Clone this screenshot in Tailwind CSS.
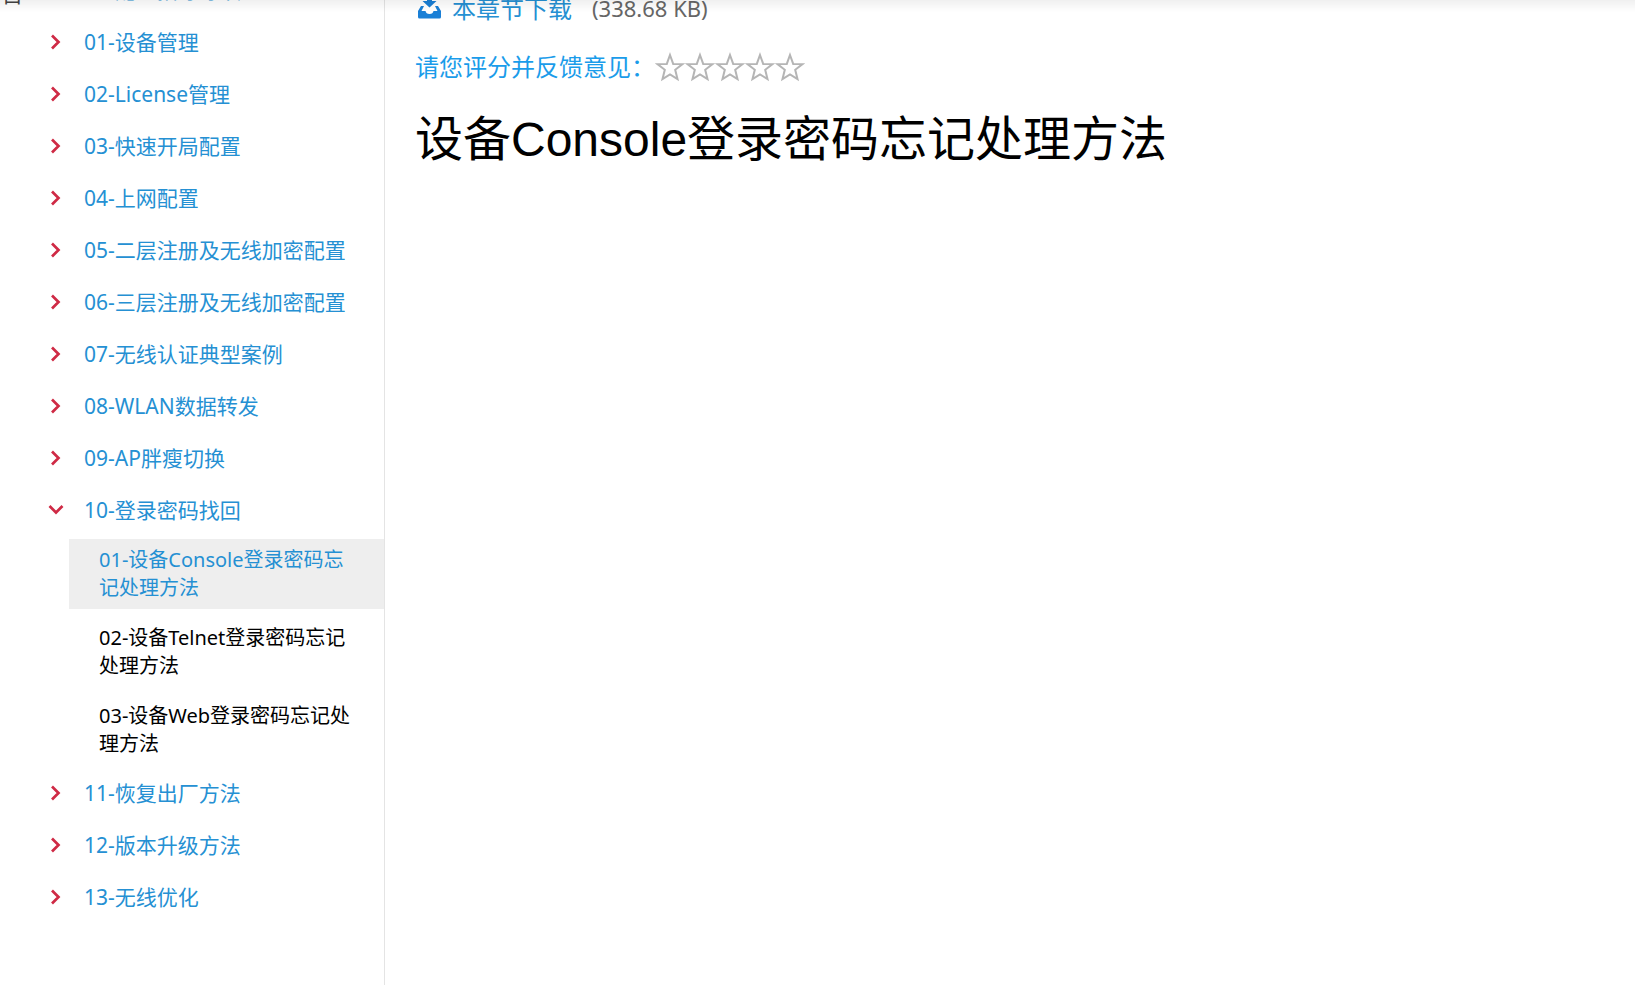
<!DOCTYPE html>
<html lang="zh-CN">
<head>
  <meta charset="UTF-8" />
  <title>设备Console登录密码忘记处理方法</title>
  <meta name="viewport" content="width=device-width, initial-scale=1.0" />
  <script src="https://cdn.jsdelivr.net/npm/@tailwindcss/browser@4"></script>
</head>
<body class="h-screen overflow-hidden bg-white text-black font-['Noto_Sans','Noto_Sans_CJK_SC',sans-serif]">

  <!-- Icons -->
  <svg class="hidden">
    <symbol id="arrow" viewBox="0 0 16 16">
      <path d="M4 1.500l6.500 6.500-6.500 6.500" fill="none" stroke="#cf2a45" stroke-width="2.700" />
    </symbol>
    <symbol id="star" viewBox="0 0 30 30">
      <path d="M15 3l3.200 8.900 9.300.2-7.300 5.700 2.300 9.200-7.500-4.600-7.500 4.600 2.300-9.200L2.500 12.100l9.300-.2z" fill="none" stroke="#b5b5b5" stroke-width="2" />
    </symbol>
  </svg>

  <!-- Shadow under the page header -->
  <div class="fixed inset-x-0 top-0 h-3 bg-linear-to-b from-black/6 to-transparent pointer-events-none z-10"></div>

  <div class="flex h-full">

    <!-- Chapter tree -->
    <nav class="flex w-[385px] shrink-0 border-r border-[#e4e4e4] overflow-hidden text-[21px] text-[#2590d3]">
      <h2 class="w-12 shrink-0 pl-0.5 -mt-[18px] text-[21px] leading-6 text-[#444]">目</h2>
      <ul class="-mt-9 flex-1 leading-[52px]">
        <li class="flex items-center"><svg class="size-4 mr-5"><use href="#arrow" /></svg><a href="#">00-配置指导导读</a></li>
        <li class="flex items-center"><svg class="size-4 mr-5"><use href="#arrow" /></svg><a href="#">01-设备管理</a></li>
        <li class="flex items-center"><svg class="size-4 mr-5"><use href="#arrow" /></svg><a href="#">02-License管理</a></li>
        <li class="flex items-center"><svg class="size-4 mr-5"><use href="#arrow" /></svg><a href="#">03-快速开局配置</a></li>
        <li class="flex items-center"><svg class="size-4 mr-5"><use href="#arrow" /></svg><a href="#">04-上网配置</a></li>
        <li class="flex items-center"><svg class="size-4 mr-5"><use href="#arrow" /></svg><a href="#">05-二层注册及无线加密配置</a></li>
        <li class="flex items-center"><svg class="size-4 mr-5"><use href="#arrow" /></svg><a href="#">06-三层注册及无线加密配置</a></li>
        <li class="flex items-center"><svg class="size-4 mr-5"><use href="#arrow" /></svg><a href="#">07-无线认证典型案例</a></li>
        <li class="flex items-center"><svg class="size-4 mr-5"><use href="#arrow" /></svg><a href="#">08-WLAN数据转发</a></li>
        <li class="flex items-center"><svg class="size-4 mr-5"><use href="#arrow" /></svg><a href="#">09-AP胖瘦切换</a></li>
        <li>
          <div class="flex items-center"><svg class="size-4 mr-5 rotate-90"><use href="#arrow" /></svg><a href="#">10-登录密码找回</a></div>
          <ul class="flex flex-col gap-2 ml-[21px] pt-[3px] pb-0.5 text-xl leading-7 text-black">
            <li><a href="#" class="block py-[7px] pl-[30px] pr-7 bg-[#eee] text-[#2590d3]">01-设备Console登录密码忘记处理方法</a></li>
            <li><a href="#" class="block py-[7px] pl-[30px] pr-7">02-设备Telnet登录密码忘记处理方法</a></li>
            <li><a href="#" class="block py-[7px] pl-[30px] pr-7">03-设备Web登录密码忘记处理方法</a></li>
          </ul>
        </li>
        <li class="flex items-center"><svg class="size-4 mr-5"><use href="#arrow" /></svg><a href="#">11-恢复出厂方法</a></li>
        <li class="flex items-center"><svg class="size-4 mr-5"><use href="#arrow" /></svg><a href="#">12-版本升级方法</a></li>
        <li class="flex items-center"><svg class="size-4 mr-5"><use href="#arrow" /></svg><a href="#">13-无线优化</a></li>
      </ul>
    </nav>

    <!-- Chapter content -->
    <main class="flex-1 min-w-0 pl-[30px] text-2xl">
      <div class="flex items-center h-9 -mt-[9px] text-[#2590d3]">
        <svg class="w-7 h-7 mr-[9px]" viewBox="0 0 28 28" fill="#1a7fd6">
          <path d="M12 1h5v5h4.500l-7 6.500-7-6.500H12z" />
          <path d="M6 11h3l-2.500 5h4c.5 2 1.500 3 4 3s3.500-1 4-3h4l-2.500-5h3l3 5v6q0 1.500-1.500 1.500h-20q-1.500 0-1.500-1.500v-6z" />
        </svg>
        <a href="#">本章节下载</a>
        <span class="ml-5 text-[22px] text-[#666]">(338.68 KB)</span>
      </div>
      <div class="flex items-center h-9 mt-[22px] text-[#1a9cea]">
        <span>请您评分并反馈意见：</span>
        <div class="flex">
          <button aria-label="1星"><svg class="size-[30px]"><use href="#star" /></svg></button>
          <button aria-label="2星"><svg class="size-[30px]"><use href="#star" /></svg></button>
          <button aria-label="3星"><svg class="size-[30px]"><use href="#star" /></svg></button>
          <button aria-label="4星"><svg class="size-[30px]"><use href="#star" /></svg></button>
          <button aria-label="5星"><svg class="size-[30px]"><use href="#star" /></svg></button>
        </div>
      </div>
      <h1 class="mt-5 text-5xl leading-[70px] font-['Liberation_Sans','Noto_Sans_CJK_SC',sans-serif]">设备Console登录密码忘记处理方法</h1>
    </main>

  </div>

</body>
</html>
